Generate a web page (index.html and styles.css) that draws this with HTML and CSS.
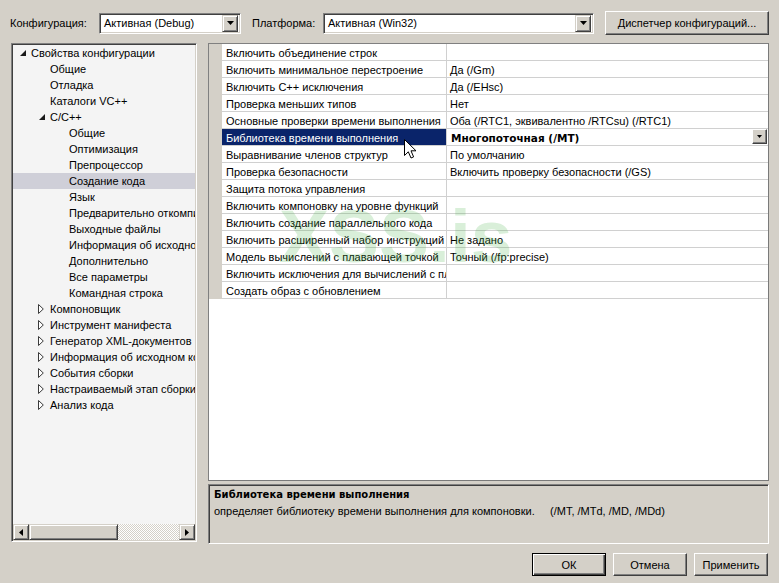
FILE: index.html
```html
<!DOCTYPE html>
<html lang="ru">
<head>
<meta charset="utf-8">
<title>Страницы свойств</title>
<link rel="stylesheet" href="styles.css">
</head>
<body>
<div class="toolbar">
  <span class="lbl lbl-cfg">Конфигурация:</span>
  <div class="combo combo-cfg"><span class="combo-text">Активная (Debug)</span><span class="drop"><svg width="7" height="4" viewBox="0 0 7 4"><path d="M0 0H7L3.5 4Z" fill="#000"/></svg></span></div>
  <span class="lbl lbl-plat">Платформа:</span>
  <div class="combo combo-plat"><span class="combo-text">Активная (Win32)</span><span class="drop"><svg width="7" height="4" viewBox="0 0 7 4"><path d="M0 0H7L3.5 4Z" fill="#000"/></svg></span></div>
  <button class="btn btn-mgr">Диспетчер конфигураций...</button>
</div>

<div class="main">
  <div class="tree">
    <div class="tree-list">
      <div class="node l0"><span class="ico"><svg width="6" height="6" viewBox="0 0 6 6"><path d="M6 0V6H0Z" fill="#1a1a1a"/></svg></span><span class="txt">Свойства конфигурации</span></div>
      <div class="node l1"><span class="ico"></span><span class="txt">Общие</span></div>
      <div class="node l1"><span class="ico"></span><span class="txt">Отладка</span></div>
      <div class="node l1"><span class="ico"></span><span class="txt">Каталоги VC++</span></div>
      <div class="node l1"><span class="ico"><svg width="6" height="6" viewBox="0 0 6 6"><path d="M6 0V6H0Z" fill="#1a1a1a"/></svg></span><span class="txt">C/C++</span></div>
      <div class="node l2"><span class="ico"></span><span class="txt">Общие</span></div>
      <div class="node l2"><span class="ico"></span><span class="txt">Оптимизация</span></div>
      <div class="node l2"><span class="ico"></span><span class="txt">Препроцессор</span></div>
      <div class="node l2 sel"><span class="ico"></span><span class="txt">Создание кода</span></div>
      <div class="node l2"><span class="ico"></span><span class="txt">Язык</span></div>
      <div class="node l2"><span class="ico"></span><span class="txt">Предварительно откомпилированные заголовки</span></div>
      <div class="node l2"><span class="ico"></span><span class="txt">Выходные файлы</span></div>
      <div class="node l2"><span class="ico"></span><span class="txt">Информация об исходном коде</span></div>
      <div class="node l2"><span class="ico"></span><span class="txt">Дополнительно</span></div>
      <div class="node l2"><span class="ico"></span><span class="txt">Все параметры</span></div>
      <div class="node l2"><span class="ico"></span><span class="txt">Командная строка</span></div>
      <div class="node l1"><span class="ico"><svg class="col" width="6" height="10" viewBox="0 0 6 10"><path d="M0.5 0.5L5.3 5L0.5 9.5Z" fill="#fff" stroke="#3a3a3a"/></svg></span><span class="txt">Компоновщик</span></div>
      <div class="node l1"><span class="ico"><svg class="col" width="6" height="10" viewBox="0 0 6 10"><path d="M0.5 0.5L5.3 5L0.5 9.5Z" fill="#fff" stroke="#3a3a3a"/></svg></span><span class="txt">Инструмент манифеста</span></div>
      <div class="node l1"><span class="ico"><svg class="col" width="6" height="10" viewBox="0 0 6 10"><path d="M0.5 0.5L5.3 5L0.5 9.5Z" fill="#fff" stroke="#3a3a3a"/></svg></span><span class="txt">Генератор XML-документов</span></div>
      <div class="node l1"><span class="ico"><svg class="col" width="6" height="10" viewBox="0 0 6 10"><path d="M0.5 0.5L5.3 5L0.5 9.5Z" fill="#fff" stroke="#3a3a3a"/></svg></span><span class="txt">Информация об исходном коде</span></div>
      <div class="node l1"><span class="ico"><svg class="col" width="6" height="10" viewBox="0 0 6 10"><path d="M0.5 0.5L5.3 5L0.5 9.5Z" fill="#fff" stroke="#3a3a3a"/></svg></span><span class="txt">События сборки</span></div>
      <div class="node l1"><span class="ico"><svg class="col" width="6" height="10" viewBox="0 0 6 10"><path d="M0.5 0.5L5.3 5L0.5 9.5Z" fill="#fff" stroke="#3a3a3a"/></svg></span><span class="txt">Настраиваемый этап сборки</span></div>
      <div class="node l1"><span class="ico"><svg class="col" width="6" height="10" viewBox="0 0 6 10"><path d="M0.5 0.5L5.3 5L0.5 9.5Z" fill="#fff" stroke="#3a3a3a"/></svg></span><span class="txt">Анализ кода</span></div>
    </div>
    <div class="hscroll">
      <span class="sbtn"><svg width="4" height="7" viewBox="0 0 4 7"><path d="M4 0V7L0 3.5Z" fill="#000"/></svg></span>
      <span class="thumb"></span>
      <span class="track"></span>
      <span class="sbtn"><svg width="4" height="7" viewBox="0 0 4 7"><path d="M0 0V7L4 3.5Z" fill="#000"/></svg></span>
    </div>
  </div>

  <div class="right">
    <div class="grid">
      <div class="row"><span class="gut"></span><span class="name">Включить объединение строк</span><span class="val"></span></div>
      <div class="row"><span class="gut"></span><span class="name">Включить минимальное перестроение</span><span class="val">Да (/Gm)</span></div>
      <div class="row"><span class="gut"></span><span class="name">Включить C++ исключения</span><span class="val">Да (/EHsc)</span></div>
      <div class="row"><span class="gut"></span><span class="name">Проверка меньших типов</span><span class="val">Нет</span></div>
      <div class="row"><span class="gut"></span><span class="name">Основные проверки времени выполнения</span><span class="val">Оба (/RTC1, эквивалентно /RTCsu) (/RTC1)</span></div>
      <div class="row selrow"><span class="gut"></span><span class="name">Библиотека времени выполнения</span><span class="val"><b>Многопоточная (/MT)</b><span class="cell-drop"><svg width="5" height="3" viewBox="0 0 5 3"><path d="M0 0H5L2.5 3Z" fill="#000"/></svg></span></span></div>
      <div class="row"><span class="gut"></span><span class="name">Выравнивание членов структур</span><span class="val">По умолчанию</span></div>
      <div class="row"><span class="gut"></span><span class="name">Проверка безопасности</span><span class="val">Включить проверку безопасности (/GS)</span></div>
      <div class="row"><span class="gut"></span><span class="name">Защита потока управления</span><span class="val"></span></div>
      <div class="row"><span class="gut"></span><span class="name">Включить компоновку на уровне функций</span><span class="val"></span></div>
      <div class="row"><span class="gut"></span><span class="name">Включить создание параллельного кода</span><span class="val"></span></div>
      <div class="row"><span class="gut"></span><span class="name">Включить расширенный набор инструкций</span><span class="val">Не задано</span></div>
      <div class="row"><span class="gut"></span><span class="name">Модель вычислений с плавающей точкой</span><span class="val">Точный (/fp:precise)</span></div>
      <div class="row"><span class="gut"></span><span class="name">Включить исключения для вычислений с плавающей точкой</span><span class="val"></span></div>
      <div class="row"><span class="gut"></span><span class="name">Создать образ с обновлением</span><span class="val"></span></div>
      <div class="watermark">XSS.is</div>
      <svg class="cursor" width="13" height="20" viewBox="0 0 13 20"><path d="M0.5 0.5V16.5L4.3 12.8L7 19L9.6 17.9L7 11.8H12Z" fill="#fff" stroke="#000" stroke-linejoin="miter"/></svg>
    </div>
    <div class="desc">
      <div class="desc-title">Библиотека времени выполнения</div>
      <div class="desc-text">определяет библиотеку времени выполнения для компоновки.     (/MT, /MTd, /MD, /MDd)</div>
    </div>
  </div>
</div>

<div class="buttons">
  <button class="btn btn-dlg btn-default">ОК</button>
  <button class="btn btn-dlg">Отмена</button>
  <button class="btn btn-dlg">Применить</button>
</div>
</body>
</html>
```

FILE: styles.css
```css
* { box-sizing: border-box; }
html, body { margin: 0; padding: 0; }
body {
  width: 779px;
  height: 583px;
  overflow: hidden;
  background: #d4d0c8;
  font-family: "Liberation Sans", Arial, sans-serif;
  font-size: 11px;
  color: #000;
}

/* ---------- toolbar ---------- */
.toolbar {
  display: flex;
  align-items: center;
  height: 24px;
  margin-top: 11px;
  padding-left: 10px;
}
.lbl { white-space: nowrap; }
.lbl-cfg { width: 89px; }
.lbl-plat { width: 71px; margin-left: 11px; }
.combo {
  height: 21px;
  display: flex;
  align-items: center;
  background: #fff;
  border: 1px solid;
  border-color: #808080 #fff #fff #808080;
  box-shadow: inset 1px 1px #404040, inset -1px -1px #d4d0c8;
  padding: 2px;
}
.combo-cfg { width: 142px; }
.combo-plat { width: 271px; }
.combo-text { flex: 1; padding-left: 2px; white-space: nowrap; overflow: hidden; }
.drop {
  width: 16px;
  height: 17px;
  display: flex;
  align-items: center;
  justify-content: center;
  background: #d4d0c8;
  border: 1px solid;
  border-color: #d4d0c8 #404040 #404040 #d4d0c8;
  box-shadow: inset 1px 1px #fff, inset -1px -1px #808080;
}
.btn {
  font-family: inherit;
  font-size: 11px;
  color: #000;
  background: #d4d0c8;
  border: 1px solid;
  border-color: #fff #404040 #404040 #fff;
  box-shadow: inset -1px -1px #808080;
  padding: 0;
  margin: 0;
}
.btn-mgr { width: 164px; height: 24px; margin-left: 11px; }

/* ---------- main ---------- */
.main {
  display: flex;
  align-items: flex-start;
  margin-top: 8px;
  padding-left: 11px;
  height: 501px;
}
.tree {
  width: 186px;
  height: 499px;
  background: #f4f4f4;
  border: 1px solid;
  border-color: #808080 #fff #fff #808080;
  box-shadow: inset 1px 1px #404040, inset -1px -1px #d4d0c8;
  padding: 1px;
  display: flex;
  flex-direction: column;
}
.tree-list { flex: 1; overflow: hidden; }
.node {
  height: 16px;
  display: flex;
  align-items: center;
  white-space: nowrap;
  overflow: hidden;
}
.node.l0 { padding-left: 4px; }
.node.l1 { padding-left: 23px; }
.node.l2 { padding-left: 42px; }
.node.sel { background: #cfcfd8; }
.ico {
  flex: none;
  width: 14px;
  height: 16px;
  display: flex;
  align-items: center;
  padding-left: 3px;
  padding-bottom: 1px;
}
.ico .col { margin-left: -1px; }
.txt { white-space: nowrap; }

.hscroll {
  height: 16px;
  display: flex;
  flex: none;
}
.sbtn, .thumb {
  height: 16px;
  background: #d4d0c8;
  border: 1px solid;
  border-color: #d4d0c8 #404040 #404040 #d4d0c8;
  box-shadow: inset 1px 1px #fff, inset -1px -1px #808080;
}
.sbtn {
  width: 16px;
  display: flex;
  align-items: center;
  justify-content: center;
}
.thumb { width: 89px; }
.track {
  flex: 1;
  height: 16px;
  background-color: #d4d0c8;
  background-image: repeating-conic-gradient(#ffffff 0 25%, #d4d0c8 0 50%);
  background-size: 2px 2px;
}

.right {
  margin-left: 11px;
  width: 561px;
  height: 501px;
  display: flex;
  flex-direction: column;
}
.grid {
  position: relative;
  height: 438px;
  background: #fff;
  border: 1px solid;
  border-color: #808080 #7a7a7a #7a7a7a #808080;
  overflow: hidden;
}
.row {
  display: flex;
  height: 17px;
  white-space: nowrap;
}
.gut {
  flex: none;
  width: 13px;
  background: #d4d0c8;
}
.name {
  flex: none;
  width: 225px;
  padding-left: 4px;
  padding-top: 1px;
  line-height: 16px;
  overflow: hidden;
  border-right: 1px solid #d0d0d0;
  border-bottom: 1px solid #d0d0d0;
}
.val {
  flex: 1;
  display: flex;
  align-items: flex-start;
  padding-left: 3px;
  padding-top: 1px;
  line-height: 16px;
  overflow: hidden;
  border-bottom: 1px solid #d0d0d0;
}
.selrow .name { background: #0a246a; color: #fff; }
.selrow .val { padding-top: 0; }
.selrow .val b {
  flex: 1;
  font-family: "DejaVu Sans", sans-serif;
  font-size: 10.5px;
  font-weight: bold;
  padding-left: 1px;
  padding-top: 1px;
  line-height: 16px;
}
.cell-drop {
  flex: none;
  width: 15px;
  height: 15px;
  margin-right: 1px;
  display: flex;
  align-items: center;
  justify-content: center;
  background: #d4d0c8;
  border: 1px solid;
  border-color: #fff #404040 #404040 #fff;
  box-shadow: inset -1px -1px #808080;
}
.watermark {
  position: absolute;
  left: 70px;
  top: 154px;
  font-family: "Liberation Sans", Arial, sans-serif;
  font-weight: bold;
  font-size: 75px;
  line-height: 76px;
  color: rgba(80, 180, 80, 0.22);
  pointer-events: none;
}
.cursor {
  position: absolute;
  left: 195px;
  top: 95px;
}

.desc {
  margin-top: 3px;
  height: 60px;
  background: #d4d0c8;
  border: 1px solid;
  border-color: #808080 #fff #fff #808080;
  box-shadow: inset 1px 1px #404040, inset -1px -1px #d4d0c8;
  padding: 2px 0 0 5px;
}
.desc-title {
  font-family: "DejaVu Sans", sans-serif;
  font-weight: bold;
  font-size: 10px;
  line-height: 16px;
}
.desc-text { line-height: 16px; white-space: pre; }

/* ---------- dialog buttons ---------- */
.buttons {
  display: flex;
  justify-content: flex-end;
  gap: 7px;
  margin-top: 9px;
  padding-right: 11px;
}
.btn-dlg { width: 74px; height: 23px; }
.btn-default {
  border: 1px solid #000;
  box-shadow: inset 1px 1px #fff, inset -1px -1px #404040, inset -2px -2px #808080;
}
```
